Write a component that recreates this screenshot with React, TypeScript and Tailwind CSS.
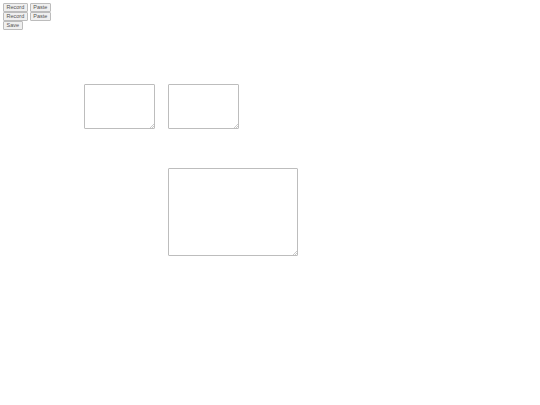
import React from "react";

function SmallButton({ label }: { label: string }) {
  return (
    <button className="h-[9px] px-[2.5px] rounded-[1px] border border-[#bcbcbc] bg-[#efefef] text-[5.5px] leading-[7px] text-[#555] font-['Liberation_Sans',Arial,sans-serif]">
      {label}
    </button>
  );
}

function Box({ className }: { className: string }) {
  return (
    <div className={`relative ${className}`}>
      <textarea className="block w-full h-full border border-[#bdbdbd] rounded-[1px] bg-white resize-none" />
      {/* resize grip */}
      <svg
        className="absolute right-[1px] bottom-[1px] pointer-events-none"
        width="4"
        height="4"
        viewBox="0 0 4 4"
      >
        <path d="M4 0L0 4M4 2L2 4" stroke="#a8a8a8" strokeWidth="0.6" />
      </svg>
    </div>
  );
}

export default function App() {
  return (
    <div className="w-[540px] h-[405px] bg-white font-['Liberation_Sans',Arial,sans-serif]">
      {/* controls */}
      <div className="p-[3px] flex flex-col items-start">
        <div className="flex gap-[2px]">
          <SmallButton label="Record" />
          <SmallButton label="Paste" />
        </div>
        <div className="flex gap-[2px]">
          <SmallButton label="Record" />
          <SmallButton label="Paste" />
        </div>
        <SmallButton label="Save" />
      </div>

      {/* inputs */}
      <div className="mt-[51px] pl-[84px] flex gap-[13px]">
        <Box className="w-[71px] h-[45px]" />
        <Box className="w-[71px] h-[45px]" />
      </div>

      {/* output */}
      <div className="mt-[39px] pl-[168px]">
        <Box className="w-[130px] h-[88px]" />
      </div>
    </div>
  );
}
